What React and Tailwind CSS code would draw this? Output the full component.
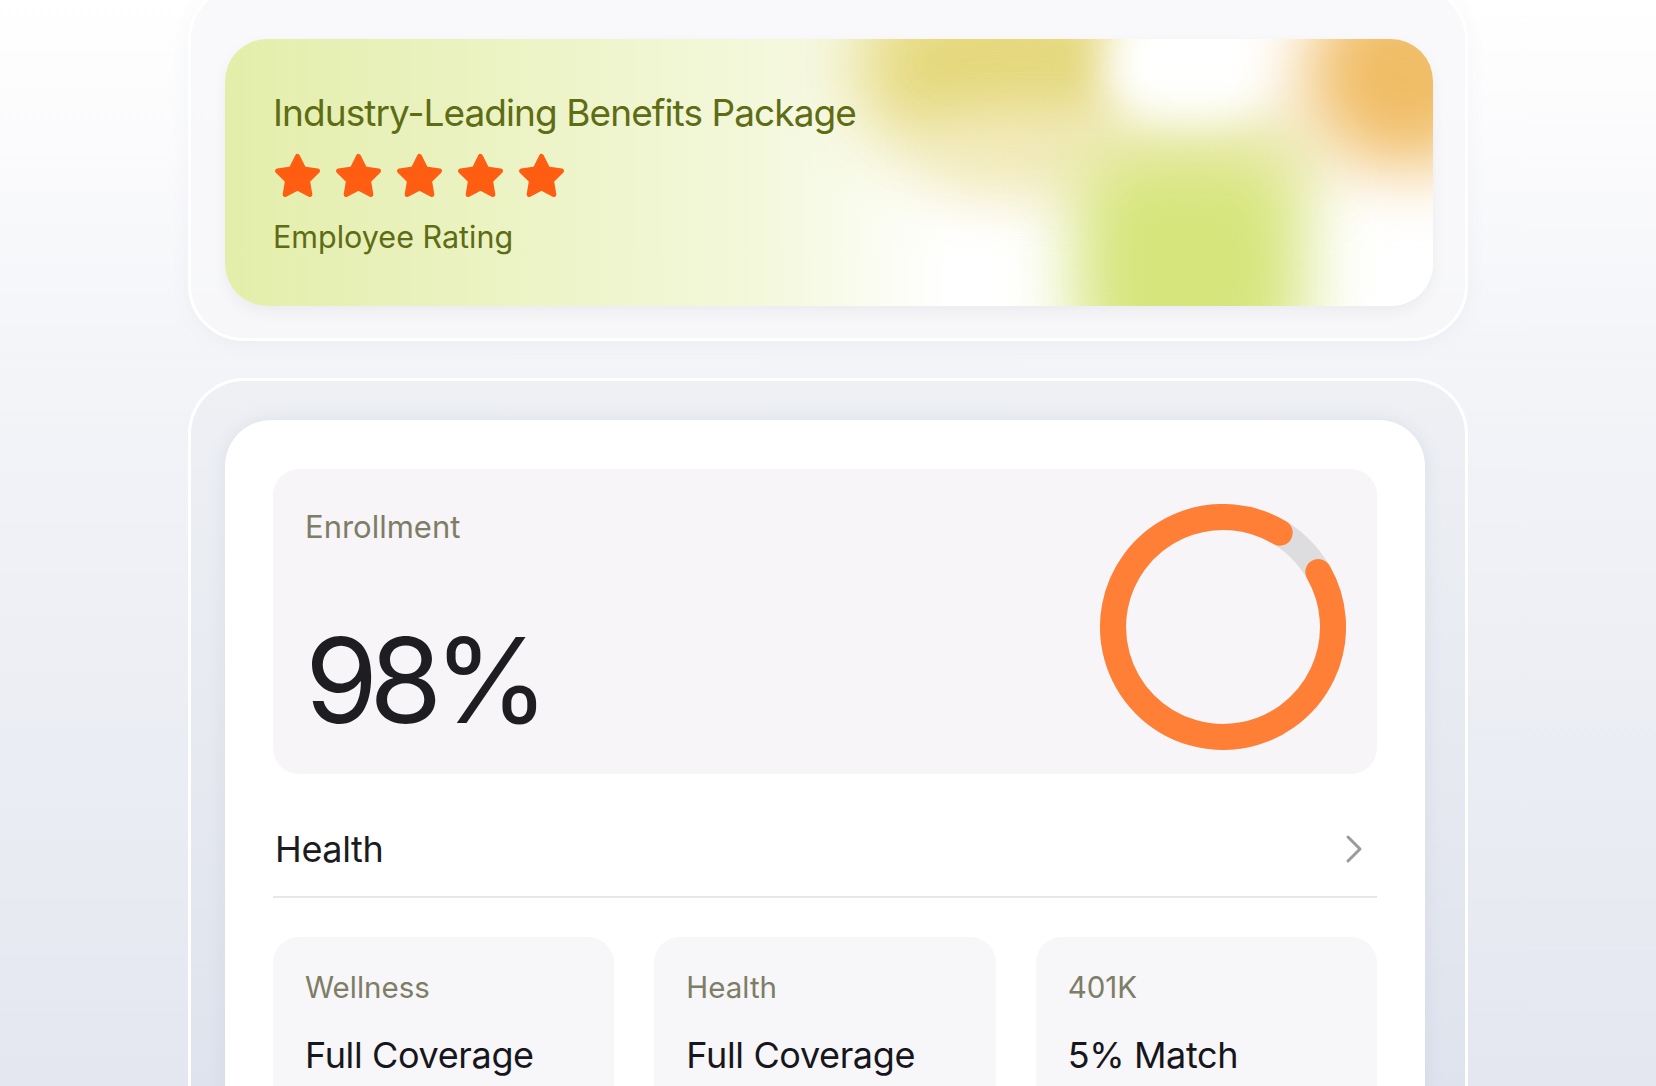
import React from "react";

const FONT = { fontFamily: "Inter, 'Noto Sans', sans-serif" };

function Star() {
  // five point star, rounded tips via stroke join
  const pts = [];
  for (let i = 0; i < 10; i++) {
    const r = i % 2 === 0 ? 21.5 : 10.8;
    const a = (Math.PI / 5) * i;
    pts.push(`${(25 + r * Math.sin(a)).toFixed(2)},${(26 - r * Math.cos(a)).toFixed(2)}`);
  }
  return (
    <svg width="49" height="49" viewBox="0 0 50 50">
      <polygon
        points={pts.join(" ")}
        fill="#fe5d12"
        stroke="#fe5d12"
        strokeWidth="5"
        strokeLinejoin="round"
      />
    </svg>
  );
}

function Ring() {
  return (
    <svg width="246" height="246" viewBox="0 0 246 246" className="mt-[10px] shrink-0">
      <circle cx="123" cy="123" r="110" fill="none" stroke="#dddcdf" strokeWidth="26" />
      <path
        d="M 218.3 68 A 110 110 0 1 1 179.7 28.7"
        fill="none"
        stroke="#ff7f36"
        strokeWidth="26"
        strokeLinecap="round"
      />
    </svg>
  );
}

function RatingCard() {
  return (
    <div className="relative h-[267px] overflow-hidden rounded-[42px] bg-white shadow-[0_6px_14px_rgba(60,60,90,0.06)]">
      {/* soft gradient wash */}
      <div className="absolute inset-0 bg-gradient-to-r from-[#e3eeaa] via-[#f4f8dc] via-45% to-white to-60%" />
      <div className="absolute left-[630px] top-[-60px] h-[170px] w-[290px] rounded-full bg-[#e2d46e] blur-[36px] opacity-90" />
      <div className="absolute left-[700px] top-[70px] h-[90px] w-[400px] rounded-full bg-[#f1e9b8] blur-[30px] opacity-80" />
      <div className="absolute left-[880px] top-[-40px] h-[130px] w-[160px] rounded-full bg-white blur-[22px]" />
      <div className="absolute left-[1080px] top-[-60px] h-[190px] w-[200px] rounded-full bg-[#f0bd66] blur-[34px]" />
      <div className="absolute left-[850px] top-[110px] h-[230px] w-[230px] rounded-[60px] bg-[#d6e57c] blur-[34px]" />
      <div className="relative flex flex-col pl-[48px] pt-[52px]">
        <h2 className="text-[37px] leading-[44px] tracking-[-0.025em] text-[#5e6c14]">
          Industry-Leading Benefits Package
        </h2>
        <div className="mt-[17px] flex gap-[12px]">
          <Star />
          <Star />
          <Star />
          <Star />
          <Star />
        </div>
        <p className="mt-[18px] text-[30.5px] leading-[36px] text-[#5e6c14]">
          Employee Rating
        </p>
      </div>
    </div>
  );
}

function MiniCard({ label, value }) {
  return (
    <div className="h-[200px] rounded-[26px] bg-[#f7f6f9] pl-[32px] pt-[33px]">
      <p className="text-[29.5px] leading-[34px] text-[#7e7d66]">{label}</p>
      <p className="mt-[30px] text-[36px] leading-[43px] tracking-[-0.01em] text-[#16161c]">{value}</p>
    </div>
  );
}

export default function App() {
  return (
    <div
      style={FONT}
      className="h-[1086px] w-full overflow-hidden bg-gradient-to-b from-white via-[#f3f4f8] via-35% to-[#e4e7f0]"
    >
      <div className="mx-auto w-[1280px]">
        {/* frame 1 */}
        <div className="-mt-[16px] rounded-[56px] border-[3px] border-white bg-[#f7f7fa]/80 pb-[32px] pl-[34px] pr-[32px] pt-[52px] shadow-[0_4px_20px_rgba(80,90,130,0.05)]">
          <RatingCard />
        </div>

        {/* frame 2 */}
        <div className="mt-[37px] h-[720px] rounded-t-[56px] border-[3px] border-b-0 border-white bg-gradient-to-b from-[#eef0f4] to-[#dfe3ed] pl-[34px] pr-[40px] pt-[39px]">
          <div className="h-full rounded-t-[46px] bg-white pl-[48px] pr-[48px] pt-[49px] shadow-[0_0_18px_rgba(120,130,170,0.12)]">
            <div className="flex h-[305px] items-center justify-between rounded-[26px] bg-[#f7f5f8] pl-[32px] pr-[31px]">
              <div className="flex h-full flex-col justify-between pb-[35px] pt-[40px]">
                <p className="text-[31px] leading-[36px] text-[#7e7d66]">Enrollment</p>
                <p className="text-[118px] leading-[118px] tracking-[-0.075em] text-[#1e1e22]">98%</p>
              </div>
              <Ring />
            </div>

            <div className="mt-[54px] flex items-center justify-between pl-[2px] pr-[14px]">
              <span className="text-[36px] leading-[42px] tracking-[-0.01em] text-[#1b1b21]">Health</span>
              <svg width="18" height="30" viewBox="0 0 18 30" fill="none">
                <path d="M3 3 L15 15 L3 27" stroke="#9b9b9b" strokeWidth="3" strokeLinecap="round" strokeLinejoin="round" />
              </svg>
            </div>
            <div className="mt-[26px] h-[2px] bg-[#e6e6eb]" />

            <div className="mt-[39px] grid grid-cols-3 gap-[40px]">
              <MiniCard label="Wellness" value="Full Coverage" />
              <MiniCard label="Health" value="Full Coverage" />
              <MiniCard label="401K" value="5% Match" />
            </div>
          </div>
        </div>
      </div>
    </div>
  );
}
